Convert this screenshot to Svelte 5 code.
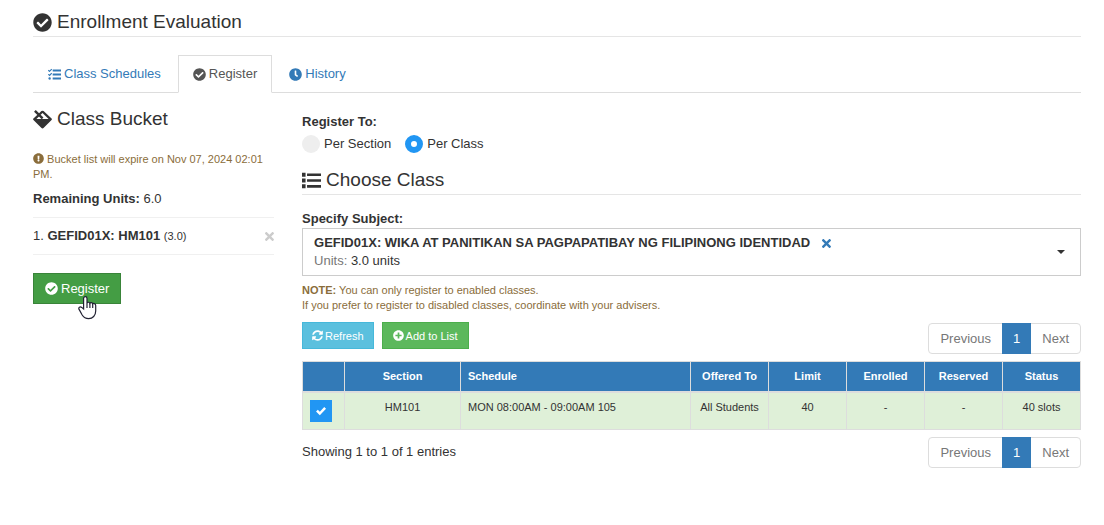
<script lang="ts">
  type Row = { section: string; schedule: string; offered: string; limit: string; enrolled: string; reserved: string; status: string };

  const icons = {
    check: { w: 512, d: 'M504 256c0 136.967-111.033 248-248 248S8 392.967 8 256 119.033 8 256 8s248 111.033 248 248zM227.314 387.314l184-184c6.248-6.248 6.248-16.379 0-22.627l-22.627-22.627c-6.248-6.249-16.379-6.249-22.628 0L216 308.118l-70.059-70.059c-6.248-6.248-16.379-6.248-22.628 0l-22.627 22.627c-6.248 6.248-6.248 16.379 0 22.627l104 104c6.249 6.249 16.379 6.249 22.628.001z' },
    plus: { w: 512, d: 'M256 8C119 8 8 119 8 256s111 248 248 248 248-111 248-248S393 8 256 8zm144 276c0 6.600-5.400 12-12 12h-92v92c0 6.600-5.400 12-12 12h-56c-6.600 0-12-5.400-12-12v-92h-92c-6.600 0-12-5.400-12-12v-56c0-6.600 5.400-12 12-12h92v-92c0-6.600 5.400-12 12-12h56c6.600 0 12 5.400 12 12v92h92c6.600 0 12 5.400 12 12v56z' },
    alert: { w: 512, d: 'M504 256c0 136.997-111.043 248-248 248S8 392.997 8 256C8 119.083 119.043 8 256 8s248 111.083 248 248zm-248 50c-25.405 0-46 20.595-46 46s20.595 46 46 46 46-20.595 46-46-20.595-46-46-46zm-43.673-165.346l7.418 136c.347 6.364 5.609 11.346 11.982 11.346h48.546c6.373 0 11.635-4.982 11.982-11.346l7.418-136c.375-6.874-5.098-12.654-11.982-12.654h-63.383c-6.884 0-12.356 5.780-11.981 12.654z' },
    clock: { w: 512, d: 'M256 8C119 8 8 119 8 256s111 248 248 248 248-111 248-248S393 8 256 8zm92.490 313l-20 25a16 16 0 0 1-22.490 2.500l-67-49.720a40 40 0 0 1-15-31.230V112a16 16 0 0 1 16-16h32a16 16 0 0 1 16 16v144l58 42.500a16 16 0 0 1 2.490 22.500z' },
    list: { w: 512, d: 'M96 360H0v104h96zm0-312H0v104h96zm0 156H0v104h96zM512 376H136v72h376zm0-312H136v72h376zm0 156H136v72h376z' },
    tasks: { w: 512, d: 'M139.610 35.500a12 12 0 0 0-17 0L58.930 98.810l-22.700-22.120a12 12 0 0 0-17 0L3.530 92.410a12 12 0 0 0 0 17l47.590 47.400a12.780 12.780 0 0 0 17.610 0l15.590-15.620L156.520 69a12.090 12.090 0 0 0 .09-17zm0 159.190a12 12 0 0 0-17 0l-63.680 63.720-22.700-22.100a12 12 0 0 0-17 0L3.530 252a12 12 0 0 0 0 17L51 316.500a12.770 12.770 0 0 0 17.600 0l15.700-15.690 72.200-72.220a12 12 0 0 0 .09-16.900zM64 368c-26.490 0-48.590 21.500-48.590 48S37.530 464 64 464a48 48 0 0 0 0-96zM512 376H184v80h328zm0-320H184v80h328zm0 160H184v80h328z' },
    fill: { w: 512, d: 'M285 30L500 228q20 20 0 40L290 480q-34 32-68 0L12 268q-20-20 0-40L227 30q29-26 58 0zM256 82L92 240H420zM28 46L74 0L282 200L236 246z' },
    times: { w: 352, d: 'M242.720 256l100.070-100.070c12.280-12.280 12.280-32.190 0-44.480l-22.240-22.240c-12.280-12.280-32.190-12.280-44.480 0L176 189.280 75.930 89.210c-12.280-12.280-32.190-12.280-44.480 0L9.210 111.450c-12.280 12.280-12.280 32.190 0 44.480L109.280 256 9.210 356.070c-12.280 12.280-12.280 32.190 0 44.480l22.240 22.240c12.280 12.280 32.200 12.280 44.480 0L176 322.720l100.070 100.070c12.280 12.280 32.200 12.280 44.480 0l22.240-22.240c12.280-12.280 12.280-32.190 0-44.480L242.720 256z' },
    sync: { w: 512, d: 'M370.720 133.280C339.458 104.008 298.888 87.962 255.848 88c-77.458.068-144.328 53.178-162.791 126.850-1.344 5.363-6.122 9.150-11.651 9.150H24.103c-7.498 0-13.194-6.807-11.807-14.176C33.933 94.924 134.813 8 256 8c66.448 0 126.791 26.136 171.315 68.685L463.030 40.970C478.149 25.851 504 36.559 504 57.941V192c0 13.255-10.745 24-24 24H345.941c-21.382 0-32.090-25.851-16.971-40.971l41.750-41.749zM32 296h134.059c21.382 0 32.090 25.851 16.971 40.971l-41.750 41.750c31.262 29.273 71.835 45.319 114.876 45.280 77.418-.070 144.315-53.144 162.787-126.849 1.344-5.363 6.122-9.150 11.651-9.150h57.304c7.498 0 13.194 6.807 11.807 14.176C478.067 417.076 377.187 504 256 504c-66.448 0-126.791-26.136-171.315-68.685L48.970 471.030C33.851 486.149 8 475.441 8 454.059V320c0-13.255 10.745-24 24-24z' },
  };

  const tabs: { label: string; icon: keyof typeof icons }[] = [
    { label: 'Class Schedules', icon: 'tasks' },
    { label: 'Register', icon: 'check' },
    { label: 'History', icon: 'clock' },
  ];

  const subjects = ['GEFID01X: WIKA AT PANITIKAN SA PAGPAPATIBAY NG FILIPINONG IDENTIDAD'];

  const rows: Row[] = [
    { section: 'HM101', schedule: 'MON 08:00AM - 09:00AM 105', offered: 'All Students', limit: '40', enrolled: '-', reserved: '-', status: '40 slots' },
  ];

  let activeTab = $state('Register');
  let registerTo = $state('class');
  let subject = $state(subjects[0]);
  let picked = $state([true]);
</script>

{#snippet icon(name: keyof typeof icons)}
  <svg class="icon" viewBox="0 0 {icons[name].w} 512" aria-hidden="true"><path d={icons[name].d} /></svg>
{/snippet}

{#snippet pager()}
  <nav class="pager" aria-label="Pages">
    <button type="button">Previous</button>
    <button type="button" class="current">1</button>
    <button type="button">Next</button>
  </nav>
{/snippet}

<main class="page">
  <h1 class="title ruled">{@render icon('check')}Enrollment Evaluation</h1>

  <nav class="tabs">
    {#each tabs as tab}
      <a href="#{tab.icon}" class:active={activeTab === tab.label} onclick={() => (activeTab = tab.label)}>
        {@render icon(tab.icon)}{tab.label}
      </a>
    {/each}
  </nav>

  <div class="columns">
    <aside>
      <h2 class="title">{@render icon('fill')}Class Bucket</h2>
      <p class="warn expire">{@render icon('alert')} Bucket list will expire on Nov 07, 2024 02:01 PM.</p>
      <p class="units"><b>Remaining Units:</b> 6.0</p>
      <div class="bucket-item">
        <span>1. <b>GEFID01X: HM101</b> <small>(3.0)</small></span>
        <button type="button" class="remove" aria-label="Remove">{@render icon('times')}</button>
      </div>
      <div class="submit">
        <button type="button" class="btn register">{@render icon('check')}Register</button>
        <svg class="pointer" viewBox="0 0 19 24" aria-hidden="true">
          <path d="M5.600 13V2.500c0-2.500 3.400-2.500 3.400 0V7c.4-1.100 2.600-1 2.900.3.500-1 2.500-.8 2.800.6.700-.9 3-.5 3 1.500V15c0 4.600-3 7.600-7 7.600-3.200 0-5-1.200-6.500-3.600L1.100 13.400c-1-1.700 1-3.200 2.600-2z" />
          <path d="M9 7v5M11.900 7.300V12M14.700 7.900V12" />
        </svg>
      </div>
    </aside>

    <section>
      <fieldset class="mode">
        <legend>Register To:</legend>
        <label><input type="radio" name="mode" value="section" bind:group={registerTo} />Per Section</label>
        <label><input type="radio" name="mode" value="class" bind:group={registerTo} />Per Class</label>
      </fieldset>

      <h2 class="title ruled choose">{@render icon('list')}Choose Class</h2>

      <label class="field-label" for="subject">Specify Subject:</label>
      <div class="subject">
        <div class="subject-body">
          <div class="subject-line">
            <select id="subject" bind:value={subject}>
              {#each subjects as name}<option>{name}</option>{/each}
            </select>
            <button type="button" class="clear" aria-label="Clear">{@render icon('times')}</button>
          </div>
          <div><span class="muted">Units:</span> 3.0 units</div>
        </div>
        <span class="caret"></span>
      </div>

      <p class="warn note">
        <b>NOTE:</b> You can only register to enabled classes.<br />
        If you prefer to register to disabled classes, coordinate with your advisers.
      </p>

      <div class="toolbar">
        <div class="actions">
          <button type="button" class="btn small info">{@render icon('sync')}Refresh</button>
          <button type="button" class="btn small success">{@render icon('plus')}Add to List</button>
        </div>
        {@render pager()}
      </div>

      <table>
        <colgroup>
          <col class="c-pick" /><col class="c-section" /><col /><col class="c-num" /><col class="c-num" /><col class="c-num" /><col class="c-num" /><col class="c-num" />
        </colgroup>
        <thead>
          <tr>
            <th></th><th>Section</th><th class="left">Schedule</th><th>Offered To</th><th>Limit</th><th>Enrolled</th><th>Reserved</th><th>Status</th>
          </tr>
        </thead>
        <tbody>
          {#each rows as row, i}
            <tr>
              <td class="pick"><input type="checkbox" aria-label="Select {row.section}" bind:checked={picked[i]} /></td>
              <td>{row.section}</td>
              <td class="left">{row.schedule}</td>
              <td>{row.offered}</td>
              <td>{row.limit}</td>
              <td>{row.enrolled}</td>
              <td>{row.reserved}</td>
              <td>{row.status}</td>
            </tr>
          {/each}
        </tbody>
      </table>

      <div class="table-foot">
        <span>Showing 1 to 1 of 1 entries</span>
        {@render pager()}
      </div>
    </section>
  </div>
</main>

<style>
  :global(body) {
    background: #fff;
  }

  .page {
    padding: 8px 23px 24px 33px;
    color: #333;
    font: 13px/18px "Liberation Sans", Arial, sans-serif;
  }

  .page * {
    box-sizing: border-box;
  }

  h1, h2, p {
    margin: 0;
  }

  button, input, select {
    margin: 0;
    color: inherit;
    font: inherit;
  }

  .icon {
    display: inline-block;
    flex: none;
    height: 1em;
    fill: currentColor;
  }

  .title {
    display: flex;
    align-items: center;
    gap: 5px;
    font-size: 19px;
    font-weight: 400;
    line-height: 28px;
  }

  .ruled {
    border-bottom: 1px solid #e5e5e5;
  }

  .tabs {
    display: flex;
    gap: 2px;
    margin-top: 18px;
    border-bottom: 1px solid #ddd;
  }

  .tabs a {
    display: flex;
    align-items: center;
    gap: 3px;
    height: 38px;
    margin-bottom: -1px;
    padding: 0 14px;
    border: 1px solid transparent;
    color: #337ab7;
    text-decoration: none;
  }

  .tabs a.active {
    border-color: #ddd #ddd #fff;
    background: #fff;
    color: #555;
  }

  .columns {
    display: grid;
    grid-template-columns: 23% minmax(0, 1fr);
    gap: 28px;
    padding-top: 12px;
  }

  .warn {
    color: #8a6d3b;
    font-size: 11px;
    line-height: 15px;
  }

  .expire {
    margin-top: 19px;
  }

  .expire .icon {
    vertical-align: -1px;
  }

  .units {
    margin-top: 8px;
  }

  .bucket-item {
    display: flex;
    align-items: center;
    justify-content: space-between;
    height: 38px;
    margin-top: 9px;
    border-top: 1px solid #f0f0f0;
    border-bottom: 1px solid #f0f0f0;
  }

  .bucket-item small {
    font-size: 11px;
  }

  .remove, .clear {
    display: flex;
    padding: 0;
    border: 0;
    background: none;
    font-size: 13px;
    cursor: pointer;
  }

  .remove {
    color: #ccc;
  }

  .submit {
    position: relative;
    margin-top: 18px;
  }

  .btn {
    display: inline-flex;
    align-items: center;
    gap: 3px;
    border: 1px solid;
    color: #fff;
    cursor: pointer;
  }

  .register {
    height: 31px;
    padding: 0 11px;
    border-color: #398439;
    background: #449d44;
  }

  .pointer {
    position: absolute;
    top: 23px;
    left: 45px;
    width: 19px;
    height: 24px;
    fill: #fff;
    stroke: #223;
    stroke-width: 1.2;
    pointer-events: none;
  }

  .mode {
    display: flex;
    gap: 14px;
    margin: 0;
    padding: 0;
    border: 0;
  }

  .mode legend {
    padding: 8px 0 4px;
    font-weight: 700;
  }

  .mode label {
    display: flex;
    align-items: center;
    gap: 4px;
  }

  .mode input {
    width: 18px;
    height: 18px;
    border-radius: 50%;
    background: #eee;
    appearance: none;
  }

  .mode input:checked {
    border: 6px solid #2196f3;
    background: #fff;
  }

  .choose {
    margin-top: 13px;
  }

  .field-label {
    display: block;
    margin-top: 15px;
    font-weight: 700;
  }

  .subject {
    display: flex;
    align-items: center;
    justify-content: space-between;
    height: 48px;
    padding: 0 15px 0 11px;
    border: 1px solid #ccc;
  }

  .subject-line {
    display: flex;
    align-items: center;
    gap: 10px;
  }

  .subject-line select {
    height: 18px;
    padding: 0;
    border: 0;
    background: none;
    font-weight: 700;
    appearance: none;
  }

  .clear {
    color: #337ab7;
  }

  .muted {
    color: #777;
  }

  .caret {
    border: 4px solid transparent;
    border-top-color: #333;
    border-bottom: 0;
  }

  .note {
    margin-top: 7px;
  }

  .toolbar, .table-foot {
    display: flex;
    justify-content: space-between;
  }

  .toolbar {
    margin-top: 9px;
  }

  .actions {
    display: flex;
    align-items: flex-start;
    gap: 8px;
  }

  .small {
    height: 27px;
    padding: 0 9px;
    font-size: 11px;
    gap: 2px;
  }

  .success {
    padding: 0 10px;
    border-color: #4cae4c;
    background: #5cb85c;
  }

  .info {
    border-color: #46b8da;
    background: #5bc0de;
  }

  .pager {
    display: flex;
    height: 31px;
    border: 1px solid #ddd;
    border-radius: 4px;
  }

  .toolbar .pager {
    margin-top: 1px;
  }

  .pager button {
    padding: 0 11px;
    border: 0;
    background: none;
    color: #777;
    cursor: pointer;
  }

  .pager .current {
    margin: -1px 0;
    background: #337ab7;
    color: #fff;
  }

  table {
    width: 100%;
    margin: 7px 0;
    border-collapse: collapse;
    table-layout: fixed;
    font-size: 11px;
    line-height: 15px;
    text-align: center;
  }

  .c-pick { width: 42px; }
  .c-section { width: 116px; }
  .c-num { width: 78px; }

  th, td {
    padding: 7px;
    border: 1px solid #ddd;
  }

  th {
    border-bottom-width: 2px;
    background: #337ab7;
    color: #fff;
  }

  td {
    background: #dff0d8;
    vertical-align: top;
  }

  .left {
    text-align: left;
  }

  .pick input {
    display: block;
    width: 22px;
    height: 22px;
    background: #eee;
    appearance: none;
  }

  .pick input:checked {
    padding: 6px;
    background: #2196f3;
  }

  .pick input:checked::before {
    content: "";
    display: block;
    height: 10px;
    background: #fff;
    clip-path: polygon(0 55%, 18% 38%, 38% 58%, 82% 10%, 100% 28%, 38% 92%);
  }

  .table-foot span {
    padding-top: 6px;
  }
</style>
